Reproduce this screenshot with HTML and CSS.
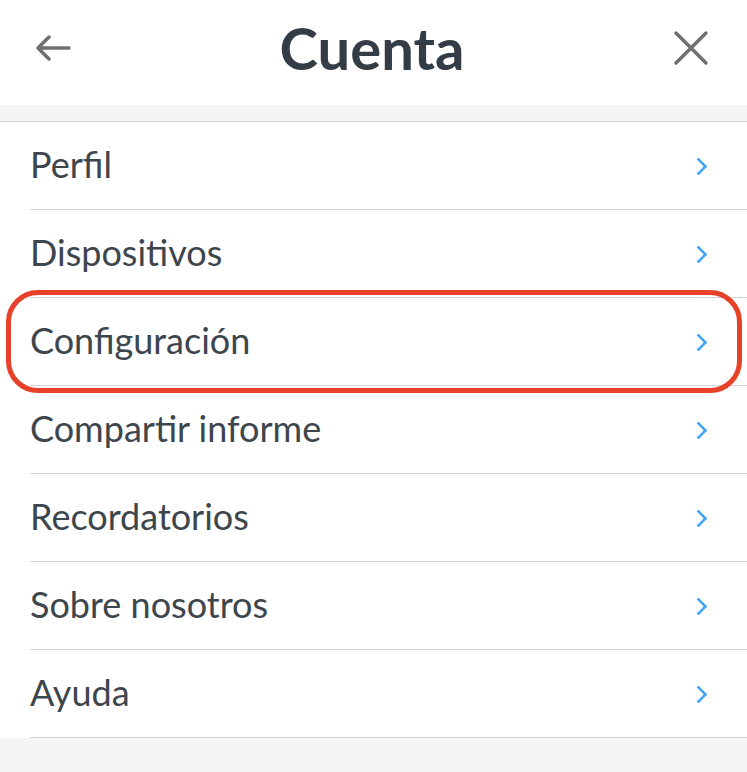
FILE: index.html
```html
<!DOCTYPE html>
<html lang="es">
<head>
  <meta charset="UTF-8">
  <title>Cuenta</title>
  <link rel="stylesheet" href="styles.css">
</head>
<body>
  <div class="header">
    <button class="icon-btn back">
      <svg width="36" height="26" viewBox="0 0 36 26"><path d="M34 13H4M14 2L3 13l11 11" fill="none" stroke="#707070" stroke-width="3.5" stroke-linecap="round" stroke-linejoin="round"/></svg>
    </button>
    <h1>Cuenta</h1>
    <button class="icon-btn close">
      <svg width="36" height="36" viewBox="0 0 36 36"><path d="M3 3l30 30M33 3L3 33" fill="none" stroke="#707070" stroke-width="3.5" stroke-linecap="round"/></svg>
    </button>
  </div>
  <div class="band"></div>
  <ul class="menu">
    <li>Perfil<span class="chev"></span></li>
    <li>Dispositivos<span class="chev"></span></li>
    <li class="marked">Configuración<span class="chev"></span></li>
    <li>Compartir informe<span class="chev"></span></li>
    <li>Recordatorios<span class="chev"></span></li>
    <li>Sobre nosotros<span class="chev"></span></li>
    <li>Ayuda<span class="chev"></span></li>
  </ul>
  <div class="footer"></div>
</body>
</html>
```
FILE: styles.css
```css
body { margin: 0; font-family: Lato, "Noto Sans", sans-serif; background: #fff; color: #3a4149; }
.header { height: 105px; display: flex; align-items: center; justify-content: space-between; padding: 0 38px 10px 35px; box-sizing: border-box; }
.header h1 { margin: 0; font-size: 58px; font-weight: 700; color: #343d46; line-height: 1; }
.icon-btn { background: none; border: none; padding: 0; display: flex; }
.band { height: 16px; background: #f4f5f7; }
.menu { list-style: none; margin: 0; padding: 0 0 0 30px; border-top: 1px solid #cfd2d5; }
.menu li {
  position: relative; box-sizing: border-box; height: 88px; border-bottom: 1px solid #cfd2d5;
  display: flex; align-items: center; justify-content: space-between;
  font-size: 36px; padding: 0 42px 4px 0; color: #3d454d;
}
.chev { width: 10px; height: 10px; margin-top: 5px; border-top: 3px solid #42a5f5; border-right: 3px solid #42a5f5; transform: rotate(45deg); border-radius: 1px; }
.marked::after {
  content: ""; position: absolute; left: -24px; right: 5px; top: -8px; bottom: -8px;
  border: 5px solid #e8412a; border-radius: 32px;
}
.footer { height: 40px; background: #f4f5f7; }
```
